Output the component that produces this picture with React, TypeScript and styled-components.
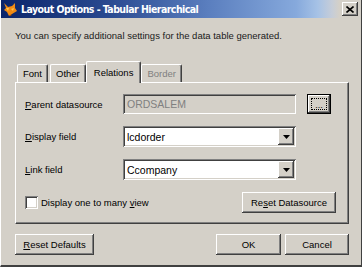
import React from 'react';
import styled, { createGlobalStyle, css } from 'styled-components';

const GlobalStyle = createGlobalStyle`
  html, body {
    margin: 0;
    padding: 0;
    background: #d4d0c8;
  }
  body {
    font-family: 'Liberation Sans', Arial, sans-serif;
    font-size: 9.5px;
    color: #000;
  }
`;

const raised = css`
  background: #d4d0c8;
  box-shadow: inset -1px -1px #404040, inset 1px 1px #ffffff, inset -2px -2px #808080,
    inset 2px 2px #d4d0c8;
`;

const sunken = css`
  box-shadow: inset 1px 1px #808080, inset -1px -1px #ffffff, inset 2px 2px #404040,
    inset -2px -2px #d4d0c8;
`;

const Window = styled.div`
  width: 362px;
  height: 267px;
  box-sizing: border-box;
  display: flex;
  flex-direction: column;
  background: #d4d0c8;
  border-left: 1px solid #ffffff;
  border-right: 1px solid #404040;
  border-bottom: 2px solid #404040;
  overflow: hidden;
`;

const TitleBar = styled.div`
  height: 18px;
  flex: none;
  display: flex;
  align-items: center;
  padding: 0 3px 0 3px;
  margin-left: -1px;
  background: linear-gradient(
    to right,
    #0a246a 0%,
    #2a4a90 30%,
    #5b7fbf 58%,
    #86a9dc 82%,
    #a6c2e6 88%,
    #c6cdd8 92%,
    #d4d0c8 94%
  );
`;

const TitleText = styled.span`
  flex: 1;
  margin-left: 3px;
  color: #ffffff;
  font-family: 'DejaVu Sans Condensed', 'DejaVu Sans', sans-serif;
  font-weight: bold;
  font-size: 10.5px;
  letter-spacing: -0.55px;
  white-space: nowrap;
`;

const CloseButton = styled.div`
  ${raised};
  width: 16px;
  height: 14px;
  display: flex;
  align-items: center;
  justify-content: center;
`;

const Body = styled.div`
  flex: 1;
  display: flex;
  flex-direction: column;
  padding: 10px 12px 0 14px;
`;

const Intro = styled.div`
  height: 16px;
  line-height: 16px;
  color: #1a1a1a;
`;

const Tabs = styled.div`
  margin-top: 17px;
  display: flex;
  align-items: flex-end;
  height: 21px;
  padding-left: 1px;
`;

const Tab = styled.div<{ $active?: boolean; $disabled?: boolean }>`
  box-sizing: border-box;
  height: ${(p) => (p.$active ? 22 : 18)}px;
  padding: 0 ${(p) => (p.$active ? 7 : 5)}px;
  margin: 0 ${(p) => (p.$active ? -1 : 1)}px ${(p) => (p.$active ? -1 : 0)}px;
  display: flex;
  align-items: center;
  color: ${(p) => (p.$disabled ? '#808080' : '#000')};
  background: #d4d0c8;
  border-top: 1px solid #ffffff;
  border-left: 1px solid #ffffff;
  border-right: 1px solid #404040;
  box-shadow: inset -1px 0 #808080;
  border-radius: 2px 2px 0 0;
  position: relative;
  z-index: ${(p) => (p.$active ? 2 : 1)};
`;

const Panel = styled.div`
  box-sizing: border-box;
  width: 334px;
  height: 142px;
  border-top: 1px solid #ffffff;
  border-left: 1px solid #ffffff;
  border-right: 1px solid #404040;
  border-bottom: 1px solid #404040;
  box-shadow: inset -1px -1px #808080;
  padding: 11px 0 0 9px;
  display: grid;
  grid-template-columns: 98px 173px 35px;
  grid-template-rows: 20px 21px 21px 21px;
  row-gap: 12px;
  align-items: center;
`;

const Label = styled.span`
  white-space: nowrap;
`;

const U = styled.span`
  text-decoration: underline;
`;

const TextBox = styled.div<{ $disabled?: boolean }>`
  ${sunken};
  height: 100%;
  box-sizing: border-box;
  display: flex;
  align-items: center;
  padding: 0 4px;
  background: ${(p) => (p.$disabled ? '#d4d0c8' : '#ffffff')};
  color: ${(p) => (p.$disabled ? '#808080' : '#000')};
  font-size: 10.5px;
`;

const Combo = styled.div`
  ${sunken};
  height: 100%;
  box-sizing: border-box;
  display: flex;
  align-items: center;
  padding: 2px 2px 2px 4px;
  background: #ffffff;
  font-size: 10.5px;
`;

const ComboText = styled.span`
  flex: 1;
`;

const ComboArrow = styled.div`
  ${raised};
  width: 16px;
  height: 17px;
  display: flex;
  align-items: center;
  justify-content: center;
`;

const BrowseButton = styled.div`
  justify-self: end;
  width: 24px;
  height: 20px;
  box-sizing: border-box;
  border: 1px solid #000;
  ${raised};
  display: flex;
  align-items: center;
  justify-content: center;
`;

const FocusRect = styled.div`
  width: 14px;
  height: 10px;
  border: 1px dotted #000;
  display: flex;
  align-items: flex-end;
  justify-content: center;
  font-size: 9px;
  line-height: 8px;
`;

const CheckRow = styled.div`
  grid-column: 1 / 4;
  display: flex;
  align-items: center;
  gap: 3px;
  margin-right: -5px;
`;

const CheckBox = styled.div`
  ${sunken};
  width: 13px;
  height: 13px;
  background: #ffffff;
`;

const PushButton = styled.div<{ $w: number }>`
  ${raised};
  width: ${(p) => p.$w}px;
  height: 21px;
  box-sizing: border-box;
  display: flex;
  align-items: center;
  justify-content: center;
  white-space: nowrap;
`;

const Footer = styled.div`
  display: flex;
  align-items: center;
  margin-top: 10px;
  gap: 4px;
`;

const Spacer = styled.div`
  flex: 1;
`;

const FoxIcon = () => (
  <svg width="15" height="15" viewBox="0 0 15 15">
    <path d="M1 1 L5 5 L9 4 L12 1 L12 6 L14 9 L9 12 L6 14 L4 10 L1 8 L3 6 Z" fill="#f08a14" />
    <path d="M3 6 L6 6 L5 9 Z M8 7 L11 6 L10 9 Z" fill="#ffc34a" />
    <path d="M6 14 L9 12 L8 14 Z" fill="#a04a00" />
  </svg>
);

const CloseGlyph = () => (
  <svg width="8" height="7" viewBox="0 0 8 7">
    <path d="M0.5 0.5 L7.5 6.5 M7.5 0.5 L0.5 6.5" stroke="#000" strokeWidth="1.6" />
  </svg>
);

const DownArrow = () => (
  <svg width="7" height="4" viewBox="0 0 7 4">
    <path d="M0 0 H7 L3.5 4 Z" fill="#000" />
  </svg>
);

export default function App() {
  return (
    <>
      <GlobalStyle />
      <Window>
        <TitleBar>
          <FoxIcon />
          <TitleText>Layout Options - Tabular Hierarchical</TitleText>
          <CloseButton>
            <CloseGlyph />
          </CloseButton>
        </TitleBar>
        <Body>
          <Intro>You can specify additional settings for the data table generated.</Intro>
          <Tabs>
            <Tab>Font</Tab>
            <Tab>Other</Tab>
            <Tab $active>Relations</Tab>
            <Tab $disabled>Border</Tab>
          </Tabs>
          <Panel>
            <Label>
              <U>P</U>arent datasource
            </Label>
            <TextBox $disabled>ORDSALEM</TextBox>
            <BrowseButton>
              <FocusRect>...</FocusRect>
            </BrowseButton>

            <Label>
              <U>D</U>isplay field
            </Label>
            <Combo>
              <ComboText>lcdorder</ComboText>
              <ComboArrow>
                <DownArrow />
              </ComboArrow>
            </Combo>
            <span />

            <Label>
              <U>L</U>ink field
            </Label>
            <Combo>
              <ComboText>Ccompany</ComboText>
              <ComboArrow>
                <DownArrow />
              </ComboArrow>
            </Combo>
            <span />

            <CheckRow>
              <CheckBox />
              <span>
                Display one to many <U>v</U>iew
              </span>
              <Spacer />
              <PushButton $w={94}>
                Re<U>s</U>et Datasource
              </PushButton>
            </CheckRow>
          </Panel>
          <Footer>
            <PushButton $w={79}>
              <U>R</U>eset Defaults
            </PushButton>
            <Spacer />
            <PushButton $w={65}>OK</PushButton>
            <PushButton $w={64}>Cancel</PushButton>
          </Footer>
        </Body>
      </Window>
    </>
  );
}
